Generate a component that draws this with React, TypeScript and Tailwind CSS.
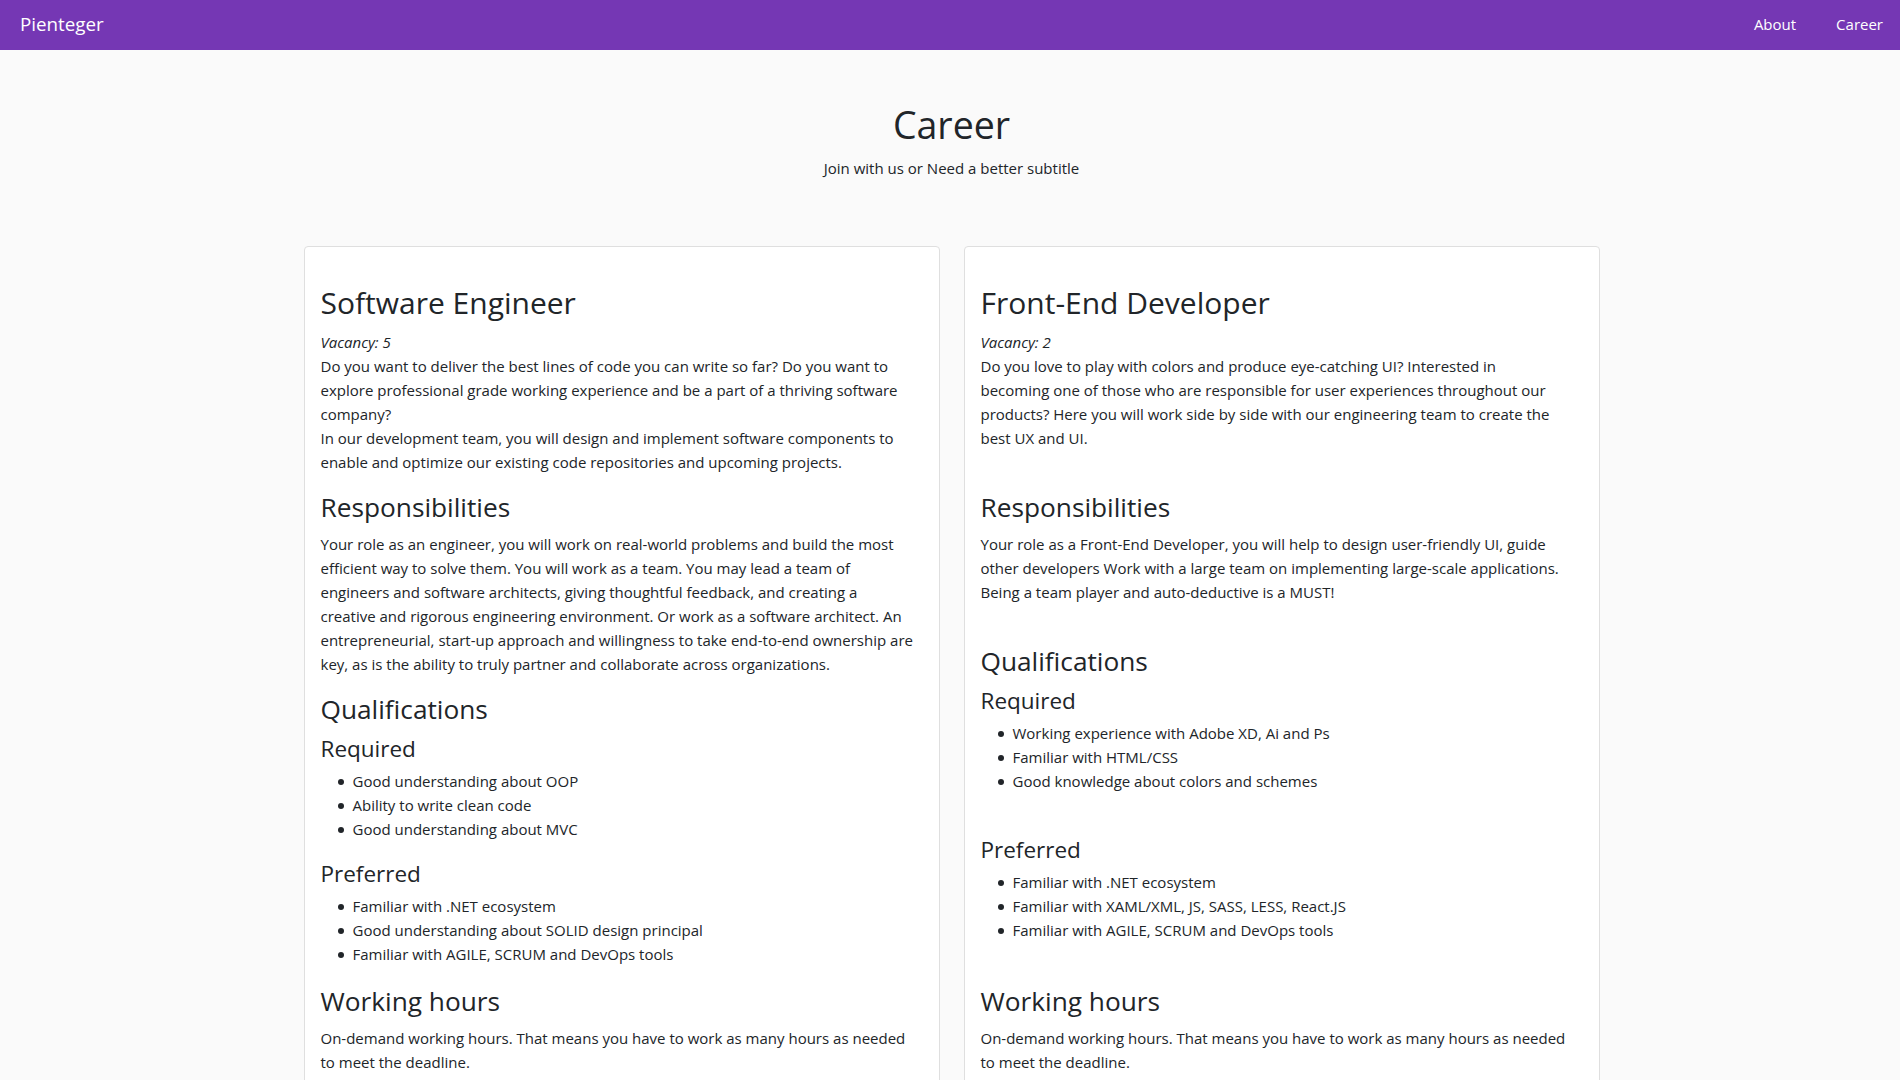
import React from "react";

type Job = {
  title: string;
  vacancy: number;
  intro: string[];
  responsibilities: string[];
  required: string[];
  preferred: string[];
  hours: string[];
  spaced?: boolean; // extra blank line after each block
};

const jobs: Job[] = [
  {
    title: "Software Engineer",
    vacancy: 5,
    intro: [
      "Do you want to deliver the best lines of code you can write so far? Do you want to",
      "explore professional grade working experience and be a part of a thriving software",
      "company?",
      "In our development team, you will design and implement software components to",
      "enable and optimize our existing code repositories and upcoming projects.",
    ],
    responsibilities: [
      "Your role as an engineer, you will work on real-world problems and build the most",
      "efficient way to solve them. You will work as a team. You may lead a team of",
      "engineers and software architects, giving thoughtful feedback, and creating a",
      "creative and rigorous engineering environment. Or work as a software architect. An",
      "entrepreneurial, start-up approach and willingness to take end-to-end ownership are",
      "key, as is the ability to truly partner and collaborate across organizations.",
    ],
    required: [
      "Good understanding about OOP",
      "Ability to write clean code",
      "Good understanding about MVC",
    ],
    preferred: [
      "Familiar with .NET ecosystem",
      "Good understanding about SOLID design principal",
      "Familiar with AGILE, SCRUM and DevOps tools",
    ],
    hours: [
      "On-demand working hours. That means you have to work as many hours as needed",
      "to meet the deadline.",
    ],
  },
  {
    title: "Front-End Developer",
    vacancy: 2,
    intro: [
      "Do you love to play with colors and produce eye-catching UI? Interested in",
      "becoming one of those who are responsible for user experiences throughout our",
      "products? Here you will work side by side with our engineering team to create the",
      "best UX and UI.",
    ],
    responsibilities: [
      "Your role as a Front-End Developer, you will help to design user-friendly UI, guide",
      "other developers Work with a large team on implementing large-scale applications.",
      "Being a team player and auto-deductive is a MUST!",
    ],
    required: [
      "Working experience with Adobe XD, Ai and Ps",
      "Familiar with HTML/CSS",
      "Good knowledge about colors and schemes",
    ],
    preferred: [
      "Familiar with .NET ecosystem",
      "Familiar with XAML/XML, JS, SASS, LESS, React.JS",
      "Familiar with AGILE, SCRUM and DevOps tools",
    ],
    hours: [
      "On-demand working hours. That means you have to work as many hours as needed",
      "to meet the deadline.",
    ],
    spaced: true,
  },
];

const Lines = ({ lines }: { lines: string[] }) => (
  <>
    {lines.map((l, i) => (
      <span key={i} className="block whitespace-nowrap">
        {l}
      </span>
    ))}
  </>
);

const Blank = ({ show }: { show?: boolean }) =>
  show ? <div className="h-6" /> : null;

const List = ({ items }: { items: string[] }) => (
  <ul className="pl-8 -mt-[2px] mb-[18px]">
    {items.map((r) => (
      <li key={r} className="flex items-center">
        <span className="w-[6px] h-[6px] rounded-full bg-[#212529] ml-[-15px] mr-[9px] mt-[2px] shrink-0" />
        {r}
      </li>
    ))}
  </ul>
);

const JobCard = ({ job }: { job: Job }) => (
  <div className="bg-white border border-[#dfdfdf] rounded-[4px] px-4 pt-[37px] pb-6">
    <h2 className="text-[30px] leading-[38px] mb-2">{job.title}</h2>
    <p className="mb-4">
      <span className="block italic">Vacancy: {job.vacancy}</span>
      <Lines lines={job.intro} />
      {job.spaced && <span className="block h-6" />}
    </p>

    <h3 className="text-[26.25px] leading-[34px] mb-2">Responsibilities</h3>
    <p className="mb-4">
      <Lines lines={job.responsibilities} />
      {job.spaced && <span className="block h-6" />}
    </p>

    <h3 className="text-[26.25px] leading-[34px] mb-2">Qualifications</h3>
    <h4 className="text-[22.5px] leading-[29px] mb-2">Required</h4>
    <List items={job.required} />
    <Blank show={job.spaced} />
    <h4 className="text-[22.5px] leading-[29px] mb-2">Preferred</h4>
    <List items={job.preferred} />
    <Blank show={job.spaced} />

    <h3 className="text-[26.25px] leading-[34px] mb-2">Working hours</h3>
    <p>
      <Lines lines={job.hours} />
    </p>
  </div>
);

export default function App() {
  return (
    <div className="min-h-screen bg-[#fafafa] font-['Open_Sans',sans-serif] text-[15px] leading-6 text-[#212529]">
      <nav className="h-[50px] bg-[#7537b4] flex items-center justify-between pl-5 pr-[17px] pb-[3px] text-white">
        <span className="text-[18.75px]">Pienteger</span>
        <div className="flex gap-10 text-[15px]">
          <a href="#">About</a>
          <a href="#">Career</a>
        </div>
      </nav>

      <div className="pl-[3px]">
        <header className="text-center pt-[51px]">
          <h1 className="text-[37.5px] leading-[48px]">Career</h1>
          <p className="mt-[7px]">Join with us or Need a better subtitle</p>
        </header>

        <main className="w-[1296px] mx-auto mt-[66px] grid grid-cols-2 gap-6 pb-12">
          {jobs.map((j) => (
            <JobCard key={j.title} job={j} />
          ))}
        </main>
      </div>
    </div>
  );
}
